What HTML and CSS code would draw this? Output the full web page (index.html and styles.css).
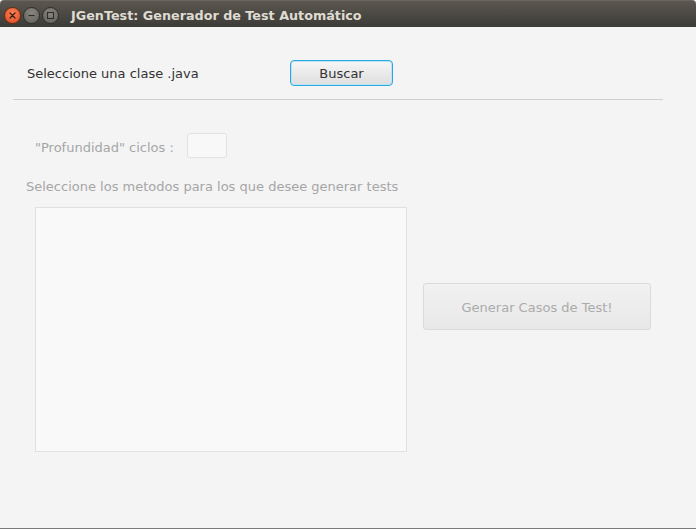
FILE: index.html
```html
<!DOCTYPE html>
<html lang="es">
<head>
<meta charset="utf-8">
<title>JGenTest</title>
<link rel="stylesheet" href="styles.css">
</head>
<body>
<div class="window">
  <div class="titlebar">
    <div class="controls">
      <span class="ctl close">
        <svg width="15" height="15" viewBox="0 0 15 15"><path d="M5 5 L10 10 M10 5 L5 10" stroke="#3a1a10" stroke-width="1.2" stroke-linecap="round"/></svg>
      </span>
      <span class="ctl">
        <svg width="15" height="15" viewBox="0 0 15 15"><path d="M4.5 7.5 H10.5" stroke="#2e2d2a" stroke-width="1.2"/></svg>
      </span>
      <span class="ctl">
        <svg width="15" height="15" viewBox="0 0 15 15"><rect x="4.5" y="4.5" width="6" height="6" fill="none" stroke="#2e2d2a" stroke-width="1.1"/></svg>
      </span>
    </div>
    <span class="title">JGenTest: Generador de Test Automático</span>
  </div>
  <div class="content">
    <div class="row-file">
      <span class="label-dark">Seleccione una clase .java</span>
      <button class="btn-buscar">Buscar</button>
    </div>
    <div class="separator"></div>
    <div class="row-depth">
      <span class="label-muted">"Profundidad" ciclos :</span>
      <span class="depth-input"></span>
    </div>
    <div class="methods-label">Seleccione los metodos para los que desee generar tests</div>
    <div class="main-row">
      <div class="method-list"></div>
      <button class="btn-generar">Generar Casos de Test!</button>
    </div>
  </div>
  <div class="bottom-edge"></div>
</div>
</body>
</html>
```

FILE: styles.css
```css
html, body {
  margin: 0;
  padding: 0;
  background: #f4f4f4;
}

.window {
  width: 696px;
  height: 529px;
  display: flex;
  flex-direction: column;
  font-family: "DejaVu Sans", sans-serif;
  font-size: 13px;
}

.titlebar {
  height: 27px;
  flex: none;
  display: flex;
  align-items: center;
  background: linear-gradient(#5b5750, #3c3b37);
  border-top: 1px solid #6a665e;
  box-sizing: border-box;
  border-radius: 4px 4px 0 0;
}

.controls {
  display: flex;
  gap: 2px;
  margin-left: 4px;
  margin-top: 2px;
}

.ctl {
  width: 15px;
  height: 15px;
  border-radius: 50%;
  background: radial-gradient(circle at 50% 35%, #8a8781, #5f5d58);
  border: 1px solid #2f2e2b;
  display: flex;
  align-items: center;
  justify-content: center;
}

.ctl svg {
  display: block;
}

.ctl.close {
  background: radial-gradient(circle at 50% 35%, #f6845a, #e0461d);
  border-color: #6b2b14;
}

.title {
  margin-left: 12px;
  margin-top: 2px;
  color: #dfdbd2;
  font-weight: bold;
  font-size: 12.75px;
}

.content {
  flex: 1;
  background: #f4f4f4;
  display: flex;
  flex-direction: column;
  align-items: flex-start;
}

.row-file {
  display: flex;
  align-items: center;
  margin-top: 33px;
  padding-left: 27px;
}

.label-dark {
  color: #333333;
  width: 263px;
}

.btn-buscar {
  width: 103px;
  height: 26px;
  box-sizing: border-box;
  font-family: "DejaVu Sans", sans-serif;
  font-size: 13px;
  color: #333333;
  border: 1px solid #2aa8e0;
  border-radius: 4px;
  background: linear-gradient(#f6f6f6, #dedede);
  box-shadow: inset 0 0 0 1px #bde3f5;
  padding: 0;
}

.separator {
  margin-top: 13px;
  margin-left: 13px;
  width: 650px;
  height: 1px;
  background: #cfcfcf;
}

.row-depth {
  display: flex;
  align-items: center;
  margin-top: 33px;
  padding-left: 35px;
}

.label-muted {
  color: #a6a6a6;
  width: 152px;
  padding-top: 3px;
}

.depth-input {
  width: 40px;
  height: 25px;
  box-sizing: border-box;
  border: 1px solid #e2e2e2;
  border-radius: 3px;
  background: #f8f8f8;
}

.methods-label {
  margin-top: 21px;
  margin-left: 26px;
  color: #a6a6a6;
  line-height: 16px;
}

.main-row {
  display: flex;
  align-items: flex-start;
  margin-top: 12px;
  margin-left: 35px;
}

.method-list {
  width: 372px;
  height: 245px;
  box-sizing: border-box;
  border: 1px solid #e0e0e0;
  background: #f9f9f9;
}

.btn-generar {
  margin-top: 76px;
  margin-left: 16px;
  width: 228px;
  height: 47px;
  box-sizing: border-box;
  border: 1px solid #dadada;
  border-radius: 3px;
  background: linear-gradient(#f1f1f1, #e8e8e8);
  font-family: "DejaVu Sans", sans-serif;
  font-size: 13px;
  color: #ababab;
  padding: 2px 0 0 0;
}

.bottom-edge {
  height: 1px;
  flex: none;
  background: #7a7a7a;
}
```
